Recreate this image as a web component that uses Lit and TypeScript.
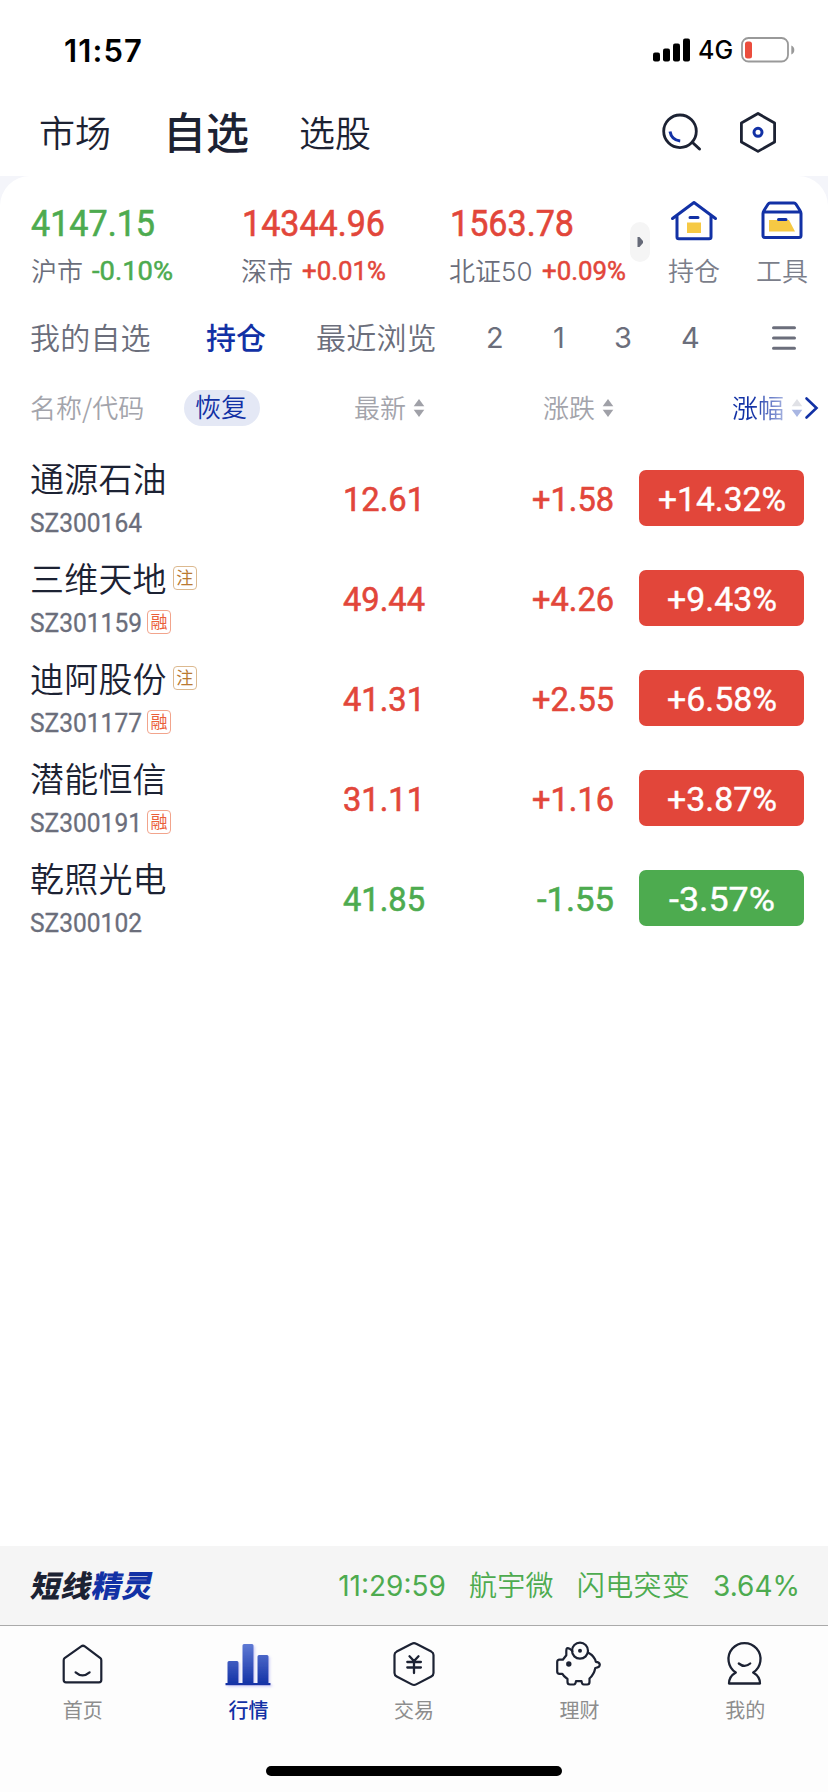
import { LitElement, html, css, svg } from "lit";
import { customElement, property } from "lit/decorators.js";

/** A figure set in a narrow numeric face: glyphs are fitted to the given advance width. */
@customElement("fit-num")
class FitNum extends LitElement {
  @property() text = "";
  @property({ type: Number }) w = 100;
  @property({ type: Number }) size = 34;
  @property({ type: Number }) heft = 0.6;
  static styles = css`
    :host { display: block; flex: none; }
    svg { display: block; overflow: visible; }
    text { font-family: Roboto, sans-serif; font-weight: 400; fill: currentColor; stroke: currentColor; }
  `;
  render() {
    const h = Math.round(this.size * 0.72);
    return html`<svg width=${this.w} height=${h}>
      <text x="0" y=${h} font-size=${this.size} stroke-width=${this.heft} textLength=${this.w} lengthAdjust="spacingAndGlyphs">${this.text}</text>
    </svg>`;
  }
}

interface Stock {
  name: string; code: string; note?: boolean; margin?: boolean;
  price: string; change: string; changeW: number; pct: string; pctW: number; down?: boolean;
}

const stocks: Stock[] = [
  { name: "通源石油", code: "SZ300164", price: "12.61", change: "+1.58", changeW: 82, pct: "+14.32%", pctW: 128 },
  { name: "三维天地", code: "SZ301159", note: true, margin: true, price: "49.44", change: "+4.26", changeW: 82, pct: "+9.43%", pctW: 110 },
  { name: "迪阿股份", code: "SZ301177", note: true, margin: true, price: "41.31", change: "+2.55", changeW: 82, pct: "+6.58%", pctW: 110 },
  { name: "潜能恒信", code: "SZ300191", margin: true, price: "31.11", change: "+1.16", changeW: 82, pct: "+3.87%", pctW: 110 },
  { name: "乾照光电", code: "SZ300102", price: "41.85", change: "-1.55", changeW: 77, pct: "-3.57%", pctW: 106, down: true },
];

const indices = [
  { value: "4147.15", w: 124, name: "沪市", pct: "-0.10%", pw: 81, down: true },
  { value: "14344.96", w: 143, name: "深市", pct: "+0.01%", pw: 84 },
  { value: "1563.78", w: 124, name: "北证50", pct: "+0.09%", pw: 84 },
];

const sorter = html`<svg class="sorter" width="12" height="20" viewBox="0 0 12 20"><path d="M6 1 11.300 8.200H.7z" fill="#a0a1a8"/><path d="M6 19 11.300 11.800H.7z" fill="#a0a1a8"/></svg>`;

const line = "#1c2233";
const blue = "#1231a5";

const tabs = [
  { label: "首页", icon: svg`<g fill="none" stroke=${line} stroke-width="2.2" stroke-linecap="round" stroke-linejoin="round"><path d="M6.600 20.200 23.200 8.400q1.800-1.300 3.600 0L42.400 20.200q.9.7.9 2V42q0 2.300-2.300 2.300H8Q5.700 44.300 5.700 42V22.200q0-1.300.9-2Z"/><path d="M17.600 34.300q6.900 6 14 0"/></g>` },
  { label: "行情", active: true, icon: svg`<defs><linearGradient id="bars" x1="0" y1="6" x2="0" y2="47" gradientUnits="userSpaceOnUse"><stop offset="0" stop-color="#5f7ad4"/><stop offset="1" stop-color="#1231a5"/></linearGradient><filter id="glow" x="-20%" y="-20%" width="150%" height="140%"><feDropShadow dx="1.5" dy="1.5" stdDeviation="1.2" flood-color="#8f8ff0" flood-opacity=".4"/></filter></defs><g fill="url(#bars)" filter="url(#glow)"><path d="M4.500 24.500q0-1.500 1.500-1.500h8q1.500 0 1.500 1.500V46h-11zM19.500 7.500Q19.500 6 21 6h8q1.500 0 1.500 1.500V46h-11zM34.500 18.500q0-1.500 1.500-1.500h8q1.500 0 1.500 1.500V46h-11z"/><path d="M2.500 45h45v2.300h-45z"/></g>` },
  { label: "交易", icon: svg`<g fill="none" stroke=${line} stroke-width="2.200" stroke-linecap="round" stroke-linejoin="round"><path d="M22.800 5.800q2.200-1.200 4.400 0L42.300 13.600q2.200 1.200 2.200 3.500V35q0 2.300-2.200 3.500L27.200 46.400q-2.200 1.200-4.400 0L7.700 38.500Q5.500 37.300 5.500 35V17.100q0-2.300 2.200-3.500Z"/></g><path d="M20.500 18.300l4.500 4.700 4.500-4.700M18.300 24h13.600M18.300 29.500h13.600M25 23.500V35" fill="none" stroke=${line} stroke-width="2.300" stroke-linecap="round"/>` },
  { label: "理财", icon: svg`<g fill="none" stroke=${line} stroke-width="2.200" stroke-linecap="round" stroke-linejoin="round"><circle cx="25" cy="12.700" r="8"/><path d="M17.500 13 14.500 10.700q-3.200-1.800-3.200 2v4.500l-3.500 4.500H4.500q-2.300 0-2.300 2.300v9.500q0 2.300 2.300 2.300h2.800q1 2.200 5.200 5.200v3q0 2.500 2.500 2.500h3.800q1.800 0 2.200-3.300h5.500q.4 3.300 2.200 3.300h3.500q2.300 0 2.300-2.500v-3.500q4.500-4 5.800-10.500 4.500-.500 4.500-3.500-.500-2.500-4-2.700Q39.500 18 33 14.500"/></g><circle cx="13.800" cy="26" r="2.700" fill=${line}/><circle cx="25" cy="12.700" r="2" fill=${line}/>` },
  { label: "我的", icon: svg`<g fill="none" stroke=${line} stroke-width="2.300" stroke-linecap="round" stroke-linejoin="round"><path d="M15.800 34.500A16 16 0 1 1 33.200 34.500Q40 38.500 40 45.500H9Q9 38.500 15.800 34.500Z"/><path d="M18.800 25.500q5.800 4.800 11.400 0"/></g>` },
];

@customElement("app-root")
class AppRoot extends LitElement {
  static styles = css`
    :host { display: block; width: 828px; height: 1792px; background: #fff; overflow: hidden; font-family: Inter, "Noto Sans CJK SC", sans-serif; color: #1c2233; }
    * { box-sizing: border-box; }
    .page { display: flex; flex-direction: column; height: 1792px; }
    svg { display: block; flex: none; overflow: visible; }
    .cjk { font-family: "Noto Sans CJK SC", sans-serif; }
    .status { display: flex; height: 88px; padding: 12px 33px 0 64px; align-items: center; justify-content: space-between; color: #000; }
    .clock { font-size: 31px; font-weight: 600; letter-spacing: 1.1px; }
    .radio { display: flex; align-items: center; gap: 8px; }
    .net { font-size: 25px; font-weight: 500; line-height: 26px; width: 35px; }
    .nav { display: flex; align-items: center; height: 88px; padding: 0 52px 0 39px; font-family: "Noto Sans CJK SC", sans-serif; font-weight: 350; font-size: 36px; }
    .nav-item { width: 124px; line-height: 80px; white-space: nowrap; padding-bottom: 3px; }
    .nav-item.on { width: 136px; font-size: 43px; font-weight: 500; padding-bottom: 5px; }
    .nav-tools { display: flex; gap: 39px; margin-left: auto; }
    .sheet-bg { background: #f4f5fa; }
    .sheet { background: #fff; border-radius: 30px 30px 0 0; }
    .indices { display: flex; height: 124px; padding-left: 31px; }
    .index { flex: none; width: 210px; padding-top: 34px; white-space: nowrap; }
    .index:nth-child(2) { width: 208px; }
    .index:nth-child(3) { width: 181px; }
    .index-num { margin-left: 1px; }
    .index:first-child .index-num { margin-left: 0; }
    .index-foot { display: flex; align-items: center; margin-top: 16px; height: 40px; font-size: 26px; line-height: 40px; font-weight: 350; color: #6b6e7b; gap: 9px; }
    .index-foot fit-num { margin-bottom: 4px; }
    .up { color: #e2463a; }
    .down { color: #4dab4f; }
    .more { flex: none; display: flex; align-items: center; justify-content: center; width: 20px; height: 40px; margin: 46px 0 0; border-radius: 10px; background: #f5f5f5; }
    .quick { flex: none; width: 88px; padding-top: 22px; display: flex; flex-direction: column; align-items: center; font-size: 26px; line-height: 40px; font-weight: 350; color: #7b7e8a; gap: 12px; }
    .groups { display: flex; align-items: center; height: 76px; padding: 0 31px 0 30px; font-size: 30px; line-height: 60px; font-weight: 350; color: #6b6e7b; white-space: nowrap; }
    .group { flex: none; }
    .group.mine { width: 176px; letter-spacing: .2px; }
    .group.on { width: 110px; color: #1231a5; font-weight: 500; }
    .group.recent { width: 170px; letter-spacing: .2px; }
    .group.n { width: 67px; font-weight: 400; font-size: 29px; }
    .group.n.slim { width: 61px; }
    .menu { margin-left: auto; }
    .heads { display: flex; align-items: center; height: 64px; padding-left: 30px; font-size: 26px; line-height: 38px; font-weight: 350; color: #a3a4ab; white-space: nowrap; }
    .h-name { width: 154px; padding-bottom: 2px; }
    .restore { width: 76px; height: 36px; line-height: 32px; border-radius: 18px; background: #e4e8f5; color: #1231a5; text-align: center; padding-right: 2px; }
    .h-col { display: flex; align-items: center; gap: 7px; width: 189px; }
    .h-col span { padding-bottom: 2px; }
    .h-price { margin-left: 94px; }
    .h-last { width: 94px; }
    .fade { color: transparent; background: linear-gradient(90deg, #1231a5 40%, #a6b3e0 100%); background-clip: text; -webkit-background-clip: text; }
    .rows { margin-top: 10px; }
    .row { display: grid; grid-template-columns: 313px 96px 175px 1fr; height: 100px; padding-left: 30px; align-items: start; }
    .who { padding-top: 4px; }
    .name { display: flex; align-items: center; height: 47px; font-size: 34px; line-height: 47px; font-weight: 350; letter-spacing: .2px; color: #1c2233; gap: 6px; }
    .code { display: flex; align-items: center; height: 30px; margin-top: 6px; color: #6b6e7b; gap: 5px; }
    .tag { width: 24px; height: 24px; line-height: 20px; border: 1px solid #dcb98f; color: #b97a33; border-radius: 4px; font-size: 17px; letter-spacing: 0; text-align: center; font-weight: 400; }
    .tag.rong { border-color: #f2a48c; color: #ea6038; }
    .figure { margin-top: 37px; }
    .right { justify-self: end; }
    .badge { display: flex; align-items: center; justify-content: center; width: 165px; height: 56px; margin: 20px 0 0 25px; border-radius: 7px; background: #e2463a; color: #fff; padding-top: 2px; }
    .badge.fall { background: #4dab4f; }
    .fill { flex: 1; }
    .wizard { display: flex; align-items: center; height: 79px; padding: 0 28px 0 31px; background: #f5f5f5; color: #4dab4f; font-size: 28px; line-height: 60px; font-weight: 350; white-space: nowrap; }
    .brand { font-family: "Noto Sans CJK SC", sans-serif; font-size: 30px; font-weight: 900; letter-spacing: .5px; color: #1c2233; transform: skewX(-12deg); margin-right: auto; padding: 0 0 3px 1px; }
    .brand b { font-weight: 900; color: #1231a5; }
    .feed { display: flex; gap: 23px; letter-spacing: .3px; }
    .feed .n { font-weight: 400; letter-spacing: 0; }
    .tabbar { display: flex; width: 828px; height: 141px; border-top: 1px solid #aaa; }
    .tab { width: 165.6px; display: flex; flex-direction: column; align-items: center; height: 110px; padding-top: 12px; font-size: 20px; line-height: 30px; font-weight: 400; color: #8d8d8d; gap: 7px; }
    .tab.on { color: #1231a5; font-weight: 500; }
    .bar-wrap { background: #fdfdfd; height: 167px; display: flex; flex-direction: column; align-items: center; }
    .home-bar { width: 296px; height: 10px; border-radius: 5px; background: #000; }
  `;

  row(s: Stock) {
    const tone = s.down ? "down" : "up";
    return html`<div class="row">
      <div class="who cjk">
        <div class="name"><span>${s.name}</span>${s.note ? html`<span class="tag">注</span>` : ""}</div>
        <div class="code"><fit-num text=${s.code} w="112" size="26" heft="0.3"></fit-num>${s.margin ? html`<span class="tag rong">融</span>` : ""}</div>
      </div>
      <fit-num class="figure ${tone}" text=${s.price} w="82" size="34"></fit-num>
      <fit-num class="figure right ${tone}" text=${s.change} w=${s.changeW} size="34"></fit-num>
      <div class="badge ${s.down ? "fall" : ""}"><fit-num text=${s.pct} w=${s.pctW} size="34" heft="0.4"></fit-num></div>
    </div>`;
  }

  render() {
    return html`<div class="page">
      <div class="status">
        <div class="clock">11:57</div>
        <div class="radio">
          <svg width="37" height="24"><rect x="0" y="14.500" width="7" height="9" rx="2"/><rect x="10" y="10.500" width="7" height="13" rx="2"/><rect x="20" y="5.500" width="7" height="18" rx="2"/><rect x="30" y=".5" width="7" height="23" rx="2"/></svg>
          <div class="net">4G</div>
          <svg width="54" height="26"><rect x="1" y="1" width="46" height="23.500" rx="6.500" fill="none" stroke="#999" stroke-width="1.800"/><rect x="4" y="4.500" width="7" height="17" rx="2.500" fill="#eb4d3d"/><path d="M50.300 8.500q3 1.200 3 4.500t-3 4.500z" fill="#999"/></svg>
        </div>
      </div>
      <div class="nav">
        <div class="nav-item">市场</div><div class="nav-item on">自选</div><div class="nav-item">选股</div>
        <div class="nav-tools">
          <svg width="39" height="40" viewBox="0 0 39 40" fill="none" stroke-linecap="round"><circle cx="18" cy="19.300" r="16.300" stroke=${line} stroke-width="2.800"/><path d="M30.500 30.500 37.500 37" stroke=${line} stroke-width="3"/><path d="M8 19.500Q9.500 28 18.200 29" stroke=${blue} stroke-width="3" stroke-linecap="butt"/></svg>
          <svg width="36" height="40" viewBox="0 0 36 40" fill="none"><path d="M18 1.500 34.600 11V30L18 39.400 1.400 30V11z" stroke=${line} stroke-width="2.800" stroke-linejoin="round"/><circle cx="18" cy="20.300" r="4" stroke=${blue} stroke-width="3"/></svg>
        </div>
      </div>
      <div class="sheet-bg"><div class="sheet">
        <div class="indices">
          ${indices.map((i) => html`<div class="index">
            <fit-num class="index-num ${i.down ? "down" : "up"}" text=${i.value} w=${i.w} size="36.500"></fit-num>
            <div class="index-foot"><span>${i.name}</span><fit-num class=${i.down ? "down" : "up"} text=${i.pct} w=${i.pw} size="26" heft="0.5"></fit-num></div>
          </div>`)}
          <div class="more"><svg width="8" height="10" viewBox="0 0 8 10"><path d="M1.500 0H3.500L7 4v2L3.500 10h-2z" fill="#666a78"/></svg></div>
          <div class="quick">
            <svg width="46" height="42" viewBox="0 0 46 42" fill="none" stroke=${blue} stroke-width="3" stroke-linecap="round" stroke-linejoin="round"><path d="M16 24.500h14v10.500H16z" fill="#f6c944" stroke="none"/><path d="M1.500 20.500 23 4.500 44.500 20.500M6 17.500V39q0 1.800 1.800 1.800h30.400q1.800 0 1.800-1.800V17.500M19 19.500h8"/></svg>
            <span>持仓</span>
          </div>
          <div class="quick">
            <svg width="42" height="42" viewBox="0 0 42 42" fill="none" stroke=${blue} stroke-width="3" stroke-linecap="round" stroke-linejoin="round"><path d="M8 22h20l6 11.500H8z" fill="#f6c944" stroke="none"/><path d="M2 15.500Q2 14 3 12.500L7 6.300q.8-1.300 2-1.300h24q1.200 0 2 1.300L39 12.500q1 1.500 1 3V37.500q0 2-2 2H4q-2 0-2-2zM3 14h36M17.500 21.500h7.500"/></svg>
            <span>工具</span>
          </div>
        </div>
        <div class="groups">
          <div class="group mine">我的自选</div>
          <div class="group on">持仓</div>
          <div class="group recent">最近浏览</div>
          <div class="group n">2</div>
          <div class="group n slim">1</div>
          <div class="group n">3</div>
          <div class="group n">4</div>
          <svg class="menu" width="26" height="24" viewBox="0 0 26 24"><path d="M2.500 1.800h21M2.500 12h21M2.500 22.200h21" stroke="#6b6e7b" stroke-width="3" stroke-linecap="round"/></svg>
        </div>
        <div class="heads cjk">
          <div class="h-name">名称/代码</div>
          <div class="restore">恢复</div>
          <div class="h-col h-price"><span>最新</span>${sorter}</div>
          <div class="h-col"><span>涨跌</span>${sorter}</div>
          <div class="h-col h-last"><span class="fade">涨幅</span>
            <svg width="27" height="22" viewBox="0 0 27 22"><path d="M6 2 11.300 9.200H.7z" fill="#e0e1e6"/><path d="M6 20 11.300 12.800H.7z" fill="#a9b6e2"/><path d="M15.500 1.500 25.500 11 15.500 20.500" fill="none" stroke=${blue} stroke-width="2.600" stroke-linecap="round"/></svg>
          </div>
        </div>
      </div></div>
      <div class="rows">${stocks.map((s) => this.row(s))}</div>
      <div class="fill"></div>
      <div class="wizard">
        <div class="brand">短线<b>精灵</b></div>
        <div class="feed"><span class="n">11:29:59</span><span>航宇微</span><span>闪电突变</span><span class="n">3.64%</span></div>
      </div>
      <div class="bar-wrap">
        <div class="tabbar">${tabs.map((t) => html`<div class="tab cjk ${t.active ? "on" : ""}"><svg width="50" height="50" viewBox="0 0 50 50">${t.icon}</svg><span>${t.label}</span></div>`)}</div>
        <div class="home-bar"></div>
      </div>
    </div>`;
  }
}
